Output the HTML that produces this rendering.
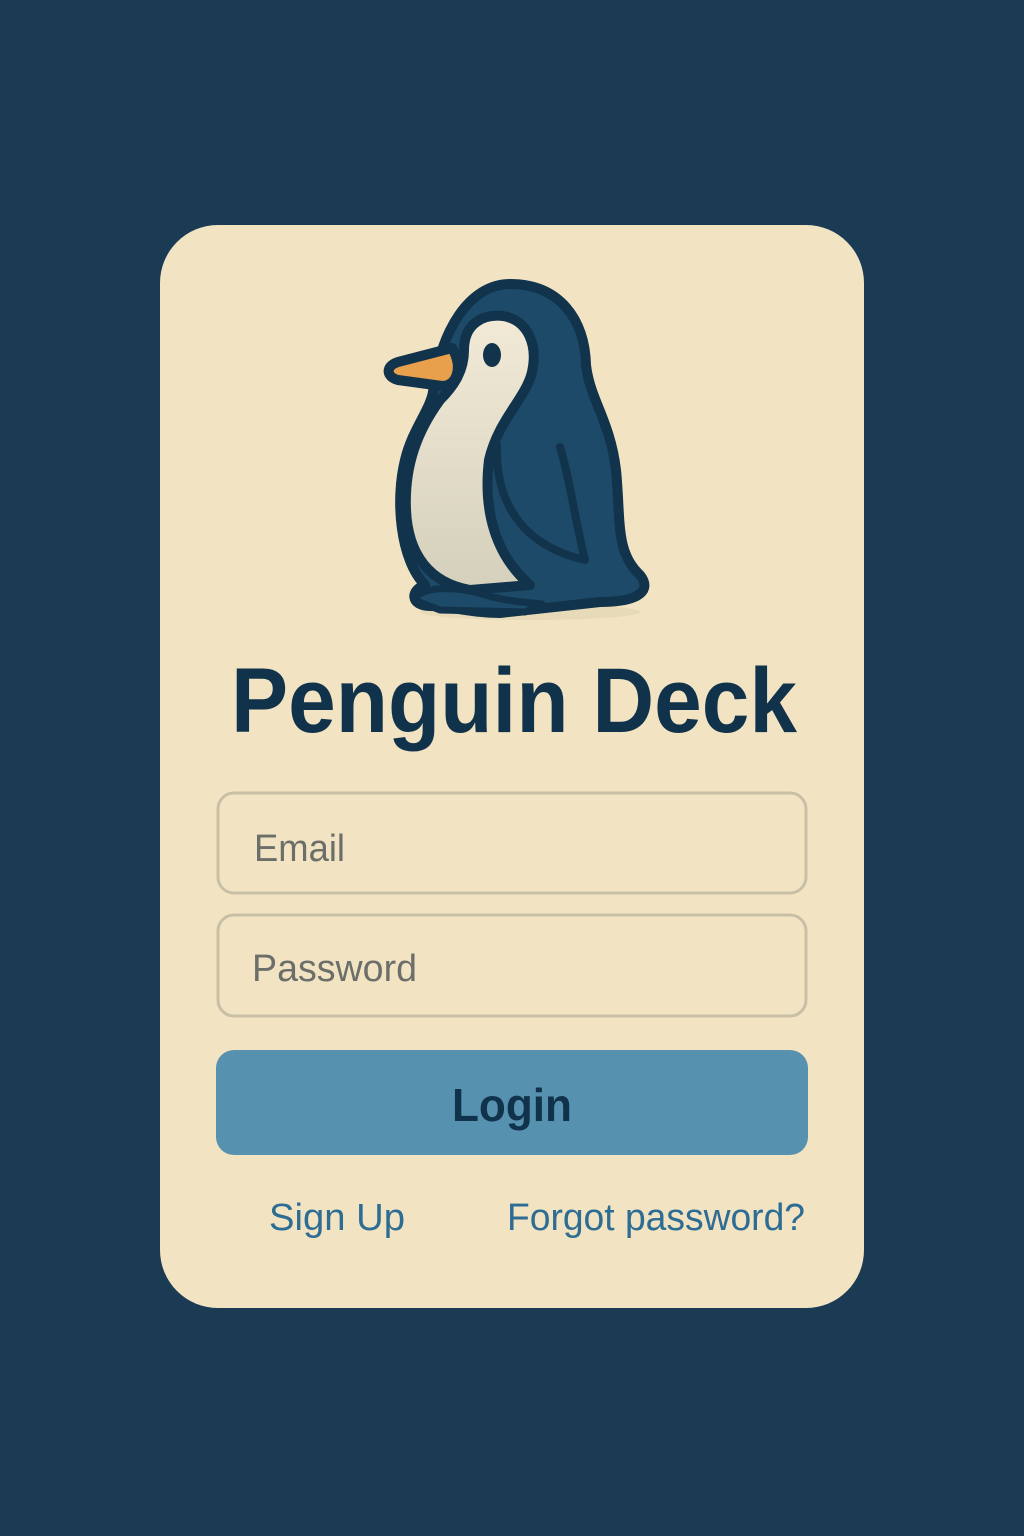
<!DOCTYPE html>
<html><head><meta charset="utf-8"><style>
html,body{margin:0;padding:0;background:#1b3a54;}
svg{display:block}
</style></head><body>
<svg width="1024" height="1536" viewBox="0 0 1024 1536" xmlns="http://www.w3.org/2000/svg">
<defs>
<linearGradient id="bel" x1="0" y1="0" x2="0" y2="1"><stop offset="0" stop-color="#f2ead6"/><stop offset="1" stop-color="#d4d0bc"/></linearGradient>
</defs>
<rect width="1024" height="1536" fill="#1b3a54"/>
<rect x="160" y="225" width="704" height="1083" rx="58" fill="#f2e4c3"/>
<ellipse cx="530" cy="612" rx="110" ry="8" fill="#e3d5b4" opacity="0.7"/>
<g stroke="#11334b" stroke-width="10" stroke-linejoin="round" stroke-linecap="round">
<path d="M433 392 C440 330 470 284 510 284 C560 284 585 320 586 365 C590 400 610 420 616 470 C621 520 615 552 640 575 C652 590 640 602 600 602 L500 613 C470 613 450 606 430 606 C410 606 410 590 425 585 C400 560 395 500 405 460 C412 430 430 410 433 392 Z" fill="#1d4a68"/>
<path d="M464 350 C464 322 485 314 503 316 C528 320 538 345 532 372 C526 398 498 420 489 460 C483 510 495 555 530 585 L470 590 C430 583 408 555 406 510 C404 465 418 430 440 400 C455 385 464 370 464 350 Z" fill="url(#bel)"/>
<path d="M497 445 C495 500 520 545 585 560 C575 520 570 480 560 447" fill="none" stroke-width="8"/>
<path d="M452 348 L398 362 C385 366 386 377 398 380 L442 386 C456 386 464 368 452 348 Z" fill="#e8a04c"/>
<path d="M414 600 C420 586 455 586 482 594 C500 600 520 602 542 604 L525 612 L440 610 Z" fill="#1d4a68" stroke-width="7"/>
</g>
<ellipse cx="492" cy="355" rx="9" ry="12" fill="#11334b"/>
<text x="231" y="732" font-family="Liberation Sans, sans-serif" font-weight="bold" font-size="92" fill="#10324a" textLength="566" lengthAdjust="spacingAndGlyphs">Penguin Deck</text>
<rect x="218" y="793" width="588" height="100" rx="16" fill="none" stroke="#c8bfa6" stroke-width="3"/>
<rect x="218" y="915" width="588" height="101" rx="16" fill="none" stroke="#c8bfa6" stroke-width="3"/>
<text x="254" y="861" font-family="Liberation Sans, sans-serif" font-size="38" fill="#6c6f69" textLength="91" lengthAdjust="spacingAndGlyphs">Email</text>
<text x="252" y="981" font-family="Liberation Sans, sans-serif" font-size="38" fill="#6c6f69" textLength="165" lengthAdjust="spacingAndGlyphs">Password</text>
<rect x="216" y="1050" width="592" height="105" rx="18" fill="#5791b0"/>
<text x="452" y="1121" font-family="Liberation Sans, sans-serif" font-weight="bold" font-size="46" fill="#10324a" textLength="120" lengthAdjust="spacingAndGlyphs">Login</text>
<text x="269" y="1230" font-family="Liberation Sans, sans-serif" font-size="38" fill="#2e6d93" textLength="136" lengthAdjust="spacingAndGlyphs">Sign Up</text>
<text x="507" y="1230" font-family="Liberation Sans, sans-serif" font-size="38" fill="#2e6d93" textLength="298" lengthAdjust="spacingAndGlyphs">Forgot password?</text>
</svg>
</body></html>
